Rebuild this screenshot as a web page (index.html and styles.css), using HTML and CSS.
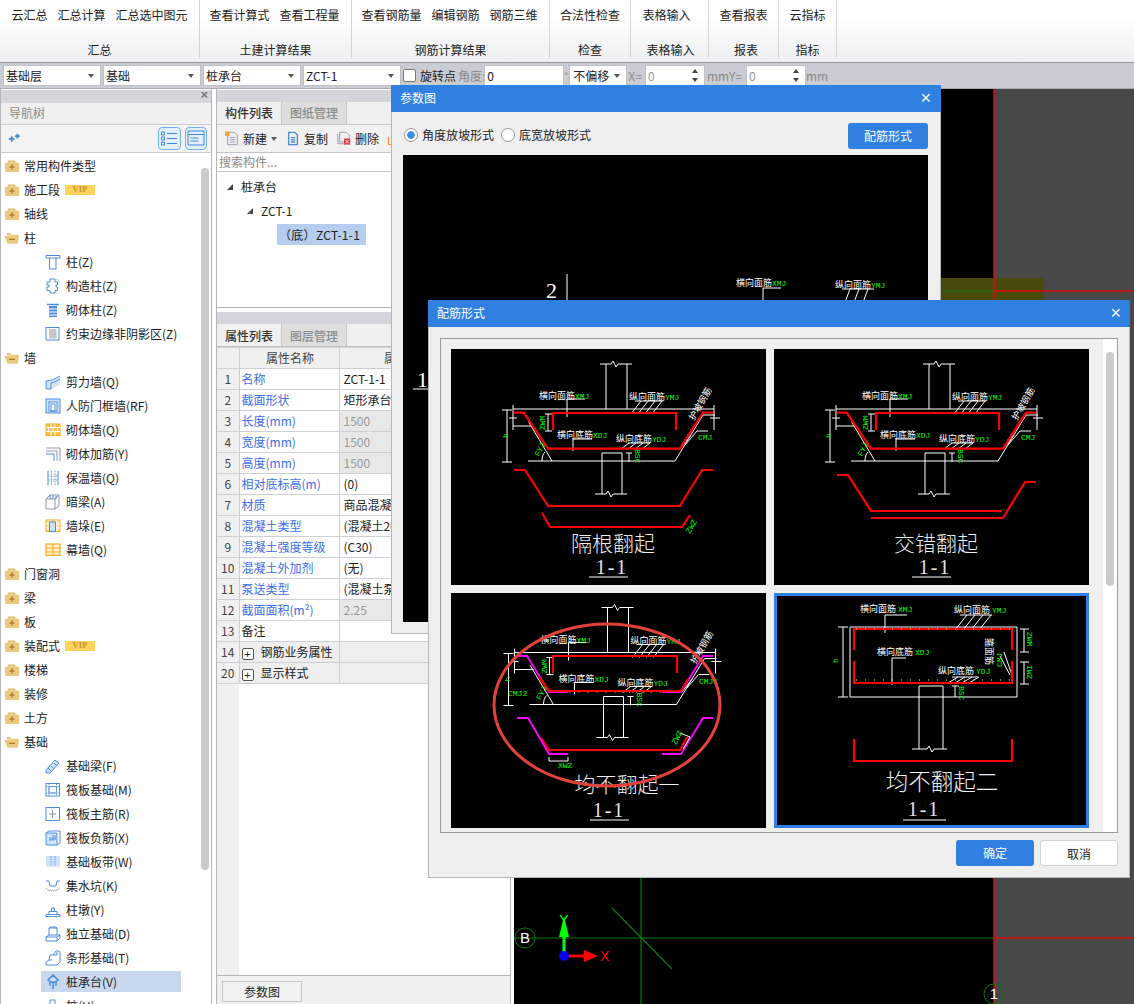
FILE: index.html
```html
<!DOCTYPE html>
<html lang="zh-CN">
<head>
<meta charset="utf-8">
<title>参数图</title>
<link rel="stylesheet" href="styles.css">
</head>
<body>
<svg class="defs" width="0" height="0">
  <defs>
    <symbol id="f-plus" viewBox="0 0 16 14"><path class="fo" d="M1 3.500V12a1 1 0 0 0 1 1h12a1 1 0 0 0 1-1V3.500z"/><path class="fo2" d="M4 3.500V1.500h7l1 2z"/><path class="fs" d="M8 5.500v5M5.500 8h5"/></symbol>
    <symbol id="f-minus" viewBox="0 0 17 14"><path class="fo2" d="M3 4V2h4l1 1.500h7V5z"/><path class="fo" d="M0.500 4.500H16l-1.500 8.500h-11z"/><path class="fs" d="M5.500 8.500h6"/></symbol>
    <symbol id="i-zhu" viewBox="0 0 16 16"><path class="b" d="M1 1.500h14v2.500H1zM4.500 4v11h6.500V4"/></symbol>
    <symbol id="i-gz" viewBox="0 0 16 16"><path class="b" d="M5 1h5v3h2.500v3H11v2h1.500v3.500H10V15H5v-2.500H2V9h2V7H2V4h3z"/><path class="bl" d="M11 1l3 1.500v4"/></symbol>
    <symbol id="i-qz" viewBox="0 0 16 16"><path class="bb" d="M2 2.500h12"/><rect class="bf" x="4" y="4" width="8" height="11"/><path class="wl" d="M4 7h8M4 10h8M4 13h8"/></symbol>
    <symbol id="i-ys" viewBox="0 0 16 16"><rect class="b" x="1" y="1.500" width="13" height="12.500"/><rect class="gf" x="4" y="3" width="7.500" height="9.500"/></symbol>
    <symbol id="i-jl" viewBox="0 0 16 16"><path class="lf" d="M1 7c4 0 9-2 14-5v9c-5 2-8 4-9 4H1z"/><path class="b" d="M1 7c4 0 9-2 14-5M1 7v8h5V9M6 9c4-1 6-2 9-4"/></symbol>
    <symbol id="i-rf" viewBox="0 0 16 16"><rect class="lfb" x="1" y="1" width="14" height="14"/><rect class="b wf" x="4" y="4" width="8" height="9"/><rect class="b" x="6" y="6" width="4" height="7"/></symbol>
    <symbol id="i-qt" viewBox="0 0 16 14"><rect class="yf" x="1" y="1" width="14" height="11.500"/><path class="ws" d="M1 4.500h14M1 8.500h14M6 1v3.500M10 1v3.500M3.500 4.500v4M8 4.500v4M12.500 4.500v4M6 8.500v4M10 8.500v4"/></symbol>
    <symbol id="i-jj" viewBox="0 0 16 16"><path class="k" d="M1 2h14v13M1 5h11v10"/><path class="b" d="M1 8h8v7"/></symbol>
    <symbol id="i-bw" viewBox="0 0 16 16"><path class="b" d="M3 1v14M13 1v14"/><path class="bd" d="M6.500 1v14M10 1v14M3 6h10M3 10h10"/></symbol>
    <symbol id="i-al" viewBox="0 0 16 16"><path class="k" d="M1 5h9v10H1zM1 5l4-4h9l-4 4M10 15l4-3V1"/><path class="b" d="M5 1v4M8 1v4M11 2v3"/></symbol>
    <symbol id="i-dq" viewBox="0 0 16 14"><rect class="yf2" x="1" y="1" width="14" height="11.500"/><path class="ws" d="M1 5h14M1 9h14M5 1v11.500M11 1v11.500"/><rect class="lfb" x="4.500" y="3" width="6" height="9.500"/></symbol>
    <symbol id="i-mq" viewBox="0 0 16 14"><rect class="yo" x="1" y="1" width="14" height="11.500"/><path class="yl" d="M1 5h14M8 5v7.500M1 9h14M8 1v4"/></symbol>
    <symbol id="i-jcl" viewBox="0 0 16 16"><path class="lfb" d="M1 12L10 2l4 3-9 10H1z"/><path class="b" d="M3 10l3 3M6 8l3 3M9 5l3 3"/></symbol>
    <symbol id="i-fb" viewBox="0 0 16 16"><rect class="b" x="1" y="1.500" width="13.500" height="12.500"/><rect class="b" x="4" y="4.500" width="7.500" height="6.500"/><path class="bd" d="M1 4.500h13M1 11h13M4 1.500v13M11.500 1.500v13"/></symbol>
    <symbol id="i-zj" viewBox="0 0 16 16"><rect class="b" x="1" y="1.500" width="13.500" height="13"/><path class="k" d="M7.500 4v8M4 8h7"/></symbol>
    <symbol id="i-fj" viewBox="0 0 16 16"><path class="lf b" d="M1 3h11v12H1z"/><path class="b" d="M1 3l3-2h11v12l-3 2M5 7v4M8 5v6M5 9h6M10 5v4"/></symbol>
    <symbol id="i-bd" viewBox="0 0 16 16"><rect class="lfb0" x="1" y="2" width="14" height="10.500"/><path class="bd" d="M6 2v10.500M10 2v10.500"/></symbol>
    <symbol id="i-js" viewBox="0 0 16 16"><path class="b" d="M1 3h3l1 5h6l1-5h3"/><path class="kd" d="M1 10c2 4 11 4 14 0M3 12h10"/></symbol>
    <symbol id="i-zd" viewBox="0 0 16 16"><path class="b" d="M1 12.500h14v2H1zM4 12.500v-3h8v3M6.500 9.500V6h3v3.500"/></symbol>
    <symbol id="i-dl" viewBox="0 0 16 16"><path class="b" d="M1 11h11v4H1zM1 11l3-2h11l-3 2M12 15l3-3V9M4 9V2l2-1h5l1 1v7M4 2h8"/></symbol>
    <symbol id="i-tx" viewBox="0 0 16 16"><path class="b" d="M1 15v-3l3-2 1-5h3l3-4h3l1 1v10l-3 3zM4 10h3M8 5h4V2"/></symbol>
    <symbol id="i-zct" viewBox="0 0 16 16"><path class="bb" d="M3 6l5-5 5 5-3 2H6zM8 8v7M5 8v4M11 8v4"/><path class="lfb0" d="M8 3l3 3-2 1H7L5 6z"/></symbol>
    <symbol id="i-zz" viewBox="0 0 16 16"><path class="b" d="M5 2h5v6H5zM7 8v7"/></symbol>
    <symbol id="i-new" viewBox="0 0 16 16"><path class="k" d="M3 1h8l3 3v11H3zM5.500 7h6M5.500 9.500h6M5.500 12h6"/><rect class="of" x="0" y="0" width="5" height="5"/></symbol>
    <symbol id="i-copy" viewBox="0 0 16 16"><path class="bb" d="M3 1h7l3 3v11H3zM5.500 7h5M5.500 9.500h5M5.500 12h5"/></symbol>
    <symbol id="i-del" viewBox="0 0 16 16"><path class="k" d="M3 1h8l3 3v3M3 1v11h5M1 3v11h7"/><rect class="rf" x="8" y="8" width="7" height="7"/><path class="ws" d="M9.500 9.500l4 4M13.500 9.500l-4 4"/></symbol>

    <g id="sec">
      <path class="w" d="M149 15H160l2-3 3 6 2-3H181M155 15V60M176 15V60M62 60H263M62 56V81M263 56V81M56 61V113M51 61H61M51 113H61M62 77H81M77.500 72.700L101 112M77 112H224L252 66H264M246 82H257M151 145V104H171V145M144 145H155l2-3 3 6 2-3H176M116 50H134M116 50V68M184 52H212M190 52L180 65M197 52L187 65M204 52L194 65M211 52L201 65M122 90H141M122 90V102M177 94H199M178 94L170 100M185 94L177 100M192 94L184 100M199 94L191 100M97 65V82M94 65H101M94 82H101M178 104V113M175 104H181M91 112c0-4 1-7 3-9M234 96L246 82M229 100L240 86M58 69h8M259 69h10"/>
      <text class="cn" x="88" y="50">横向面筋<tspan class="en">XMJ</tspan></text>
      <text class="cn" x="178" y="51">纵向面筋<tspan class="en">YMJ</tspan></text>
      <text class="cn" x="106" y="89">横向底筋<tspan class="en">XDJ</tspan></text>
      <text class="cn" x="165" y="93">纵向底筋<tspan class="en">YDJ</tspan></text>
      <text class="en" transform="translate(57 89) rotate(-90)">h</text>
      <text class="en" transform="translate(94 81) rotate(-90)">ZWM</text>
      <text class="en" transform="translate(88 108) rotate(-62)">FYJ</text>
      <text class="cn" transform="translate(243 72) rotate(-60)">护坡钢筋</text>
      <text class="en" transform="translate(184 100) rotate(90)">BSC</text>
      <path class="md" d="M230 96L245 72"/>
    </g>
    <g id="marks"><path class="dots" d="M104 64H224M99 99.700H228"/></g>
  </defs>
</svg>

<div class="app">
  <header class="ribbon">
    <section class="rgroup g1"><div class="rbtns"><span>云汇总</span><span>汇总计算</span><span>汇总选中图元</span></div><div class="rlabel">汇总</div></section>
    <section class="rgroup g2"><div class="rbtns"><span>查看计算式</span><span>查看工程量</span></div><div class="rlabel">土建计算结果</div></section>
    <section class="rgroup g3"><div class="rbtns"><span>查看钢筋量</span><span>编辑钢筋</span><span>钢筋三维</span></div><div class="rlabel">钢筋计算结果</div></section>
    <section class="rgroup g4"><div class="rbtns"><span>合法性检查</span></div><div class="rlabel">检查</div></section>
    <section class="rgroup g5"><div class="rbtns"><span>表格输入</span></div><div class="rlabel">表格输入</div></section>
    <section class="rgroup g6"><div class="rbtns"><span>查看报表</span></div><div class="rlabel">报表</div></section>
    <section class="rgroup g7"><div class="rbtns"><span>云指标</span></div><div class="rlabel">指标</div></section>
  </header>

  <div class="toolbar">
    <div class="sel sel-98">基础层<i class="caret"></i></div>
    <div class="sel sel-98">基础<i class="caret"></i></div>
    <div class="sel sel-98">桩承台<i class="caret"></i></div>
    <div class="sel sel-98">ZCT-1<i class="caret"></i></div>
    <span class="check"></span>
    <span class="tlabel lab-rot">旋转点</span><span class="tlabel dim">角度:</span>
    <div class="num num-angle">0</div>
    <span class="tlabel dim deg">°</span>
    <div class="sel sel-off">不偏移<i class="caret"></i></div>
    <span class="tlabel dim lab-x">X=</span>
    <div class="num num-60 muted">0<span class="spin"></span></div>
    <span class="tlabel dim lab-y">mmY=</span>
    <div class="num num-60 muted">0<span class="spin"></span></div>
    <span class="tlabel dim lab-mm">mm</span>
  </div>

  <main class="main">
    <aside class="nav">
      <div class="strip"><span class="strip-x">×</span></div>
      <div class="nav-title">导航树</div>
      <div class="nav-tools">
        <svg class="sparkle" viewBox="0 0 14 10"><path d="M4 3v6M1 6h6M10 0.500v5M7.500 3h5"/></svg>
        <span class="view-btn"><svg viewBox="0 0 18 16"><path d="M1.500 2h3v3h-3zM1.500 7h3v3h-3zM1.500 12h3v3h-3zM7 3.500h10M7 8.500h10M7 13.500h10"/></svg></span>
        <span class="view-btn"><svg viewBox="0 0 18 16"><path d="M1 1h16v14H1zM1 4.500h16M3.500 8h8M3.500 11h8"/></svg></span>
      </div>
      <div class="nav-body">
        <ul class="tree">
          <li class="cat"><svg class="fold"><use href="#f-plus"/></svg>常用构件类型</li>
          <li class="cat"><svg class="fold"><use href="#f-plus"/></svg>施工段<b class="vip">VIP</b></li>
          <li class="cat"><svg class="fold"><use href="#f-plus"/></svg>轴线</li>
          <li class="cat"><svg class="fold"><use href="#f-minus"/></svg>柱</li>
          <li class="item"><svg class="ic"><use href="#i-zhu"/></svg>柱(Z)</li>
          <li class="item"><svg class="ic"><use href="#i-gz"/></svg>构造柱(Z)</li>
          <li class="item"><svg class="ic"><use href="#i-qz"/></svg>砌体柱(Z)</li>
          <li class="item"><svg class="ic"><use href="#i-ys"/></svg>约束边缘非阴影区(Z)</li>
          <li class="cat"><svg class="fold"><use href="#f-minus"/></svg>墙</li>
          <li class="item"><svg class="ic"><use href="#i-jl"/></svg>剪力墙(Q)</li>
          <li class="item"><svg class="ic"><use href="#i-rf"/></svg>人防门框墙(RF)</li>
          <li class="item"><svg class="ic"><use href="#i-qt"/></svg>砌体墙(Q)</li>
          <li class="item"><svg class="ic"><use href="#i-jj"/></svg>砌体加筋(Y)</li>
          <li class="item"><svg class="ic"><use href="#i-bw"/></svg>保温墙(Q)</li>
          <li class="item"><svg class="ic"><use href="#i-al"/></svg>暗梁(A)</li>
          <li class="item"><svg class="ic"><use href="#i-dq"/></svg>墙垛(E)</li>
          <li class="item"><svg class="ic"><use href="#i-mq"/></svg>幕墙(Q)</li>
          <li class="cat"><svg class="fold"><use href="#f-plus"/></svg>门窗洞</li>
          <li class="cat"><svg class="fold"><use href="#f-plus"/></svg>梁</li>
          <li class="cat"><svg class="fold"><use href="#f-plus"/></svg>板</li>
          <li class="cat"><svg class="fold"><use href="#f-plus"/></svg>装配式<b class="vip">VIP</b></li>
          <li class="cat"><svg class="fold"><use href="#f-plus"/></svg>楼梯</li>
          <li class="cat"><svg class="fold"><use href="#f-plus"/></svg>装修</li>
          <li class="cat"><svg class="fold"><use href="#f-plus"/></svg>土方</li>
          <li class="cat"><svg class="fold"><use href="#f-minus"/></svg>基础</li>
          <li class="item"><svg class="ic"><use href="#i-jcl"/></svg>基础梁(F)</li>
          <li class="item"><svg class="ic"><use href="#i-fb"/></svg>筏板基础(M)</li>
          <li class="item"><svg class="ic"><use href="#i-zj"/></svg>筏板主筋(R)</li>
          <li class="item"><svg class="ic"><use href="#i-fj"/></svg>筏板负筋(X)</li>
          <li class="item"><svg class="ic"><use href="#i-bd"/></svg>基础板带(W)</li>
          <li class="item"><svg class="ic"><use href="#i-js"/></svg>集水坑(K)</li>
          <li class="item"><svg class="ic"><use href="#i-zd"/></svg>柱墩(Y)</li>
          <li class="item"><svg class="ic"><use href="#i-dl"/></svg>独立基础(D)</li>
          <li class="item"><svg class="ic"><use href="#i-tx"/></svg>条形基础(T)</li>
          <li class="item active"><svg class="ic"><use href="#i-zct"/></svg>桩承台(V)</li>
          <li class="item"><svg class="ic"><use href="#i-zz"/></svg>桩(U)</li>
        </ul>
        <div class="nav-scroll"><div class="nav-thumb"></div></div>
      </div>
    </aside>

    <section class="mid">
      <div class="strip"></div>
      <div class="tabs"><span class="tab on">构件列表</span><span class="tab">图纸管理</span></div>
      <div class="mid-tools">
        <svg class="tool-ic"><use href="#i-new"/></svg><span class="tool-txt">新建</span><i class="caret"></i>
        <svg class="tool-ic ti-copy"><use href="#i-copy"/></svg><span class="tool-txt">复制</span>
        <svg class="tool-ic ti-del"><use href="#i-del"/></svg><span class="tool-txt">删除</span>
        <i class="tool-edge"></i>
      </div>
      <div class="search">搜索构件...</div>
      <div class="ctree">
        <div class="cnode n0"><i class="tri"></i>桩承台</div>
        <div class="cnode n1"><i class="tri"></i>ZCT-1</div>
        <div class="cnode n2"><span class="csel">（底）ZCT-1-1</span></div>
      </div>
      <div class="strip strip-2"></div>
      <div class="tabs tabs-2"><span class="tab on">属性列表</span><span class="tab">图层管理</span></div>
      <table class="props">
        <thead><tr><th class="c0"></th><th class="c1">属性名称</th><th class="c2">属性值</th><th class="c3">附加</th></tr></thead>
        <tbody>
          <tr><td class="c0">1</td><td class="c1 name">名称</td><td>ZCT-1-1</td><td></td></tr>
          <tr><td class="c0">2</td><td class="c1 name">截面形状</td><td>矩形承台</td><td></td></tr>
          <tr><td class="c0">3</td><td class="c1 name">长度(mm)</td><td class="ro">1500</td><td></td></tr>
          <tr><td class="c0">4</td><td class="c1 name">宽度(mm)</td><td class="ro">1500</td><td></td></tr>
          <tr><td class="c0">5</td><td class="c1 name">高度(mm)</td><td class="ro">1500</td><td></td></tr>
          <tr><td class="c0">6</td><td class="c1 name">相对底标高(m)</td><td>(0)</td><td></td></tr>
          <tr><td class="c0">7</td><td class="c1 name">材质</td><td>商品混凝土</td><td></td></tr>
          <tr><td class="c0">8</td><td class="c1 name">混凝土类型</td><td>(混凝土20石)</td><td></td></tr>
          <tr><td class="c0">9</td><td class="c1 name">混凝土强度等级</td><td>(C30)</td><td></td></tr>
          <tr><td class="c0">10</td><td class="c1 name">混凝土外加剂</td><td>(无)</td><td></td></tr>
          <tr><td class="c0">11</td><td class="c1 name">泵送类型</td><td>(混凝土泵)</td><td></td></tr>
          <tr><td class="c0">12</td><td class="c1 name">截面面积(m²)</td><td class="ro">2.25</td><td></td></tr>
          <tr><td class="c0">13</td><td class="c1">备注</td><td></td><td></td></tr>
          <tr class="grp"><td class="c0">14</td><td class="c1"><i class="pbox">+</i>钢筋业务属性</td><td></td><td></td></tr>
          <tr class="grp"><td class="c0">20</td><td class="c1"><i class="pbox">+</i>显示样式</td><td></td><td></td></tr>
        </tbody>
      </table>
      <div class="props-fill"><div class="fill-idx"></div></div>
      <div class="mid-foot"><span class="foot-btn">参数图</span></div>
    </section>

    <div class="canvas">
      <svg class="cad" width="620" height="915" viewBox="0 0 620 915">
        <rect class="gray" x="480" y="0" width="140" height="915"/>
        <rect class="olive" x="426" y="189" width="104" height="40"/>
        <path class="cg" d="M426 202H480M0 849H480M127 789V915"/>
        <path class="cg" d="M98 819L158 880"/>
        <path class="cr" d="M480 0V915M480 202H620M480 849H620"/>
        <circle class="cgc" cx="11" cy="849" r="10"/>
        <text class="cadt" x="11" y="854">B</text>
        <circle class="cgc" cx="480" cy="905" r="10"/>
        <text class="cadt" x="480" y="910">1</text>
        <path class="ay" d="M50 867V845"/><path class="ayf" d="M45 848L50 827L55 848z"/>
        <path class="ax" d="M50 867H72"/><path class="axf" d="M70 861L84 867L70 873z"/>
        <circle class="ao" cx="50" cy="867" r="5"/>
        <text class="ayt" x="50" y="836">Y</text>
        <text class="axt" x="86" y="872">X</text>
      </svg>
    </div>
  </main>

  <div class="dlg dlg-params">
    <div class="dlg-head head-params"><span>参数图</span><span class="dlg-x">×</span></div>
    <div class="params-bar">
      <span class="radio on"></span><span class="rtxt">角度放坡形式</span>
      <span class="radio r2"></span><span class="rtxt">底宽放坡形式</span>
      <span class="btn btn-blue btn-form">配筋形式</span>
    </div>
    <div class="params-view">
      <svg width="525" height="467" viewBox="0 0 525 467">
        <text class="big" x="143" y="143">2</text>
        <path class="w" d="M164 119V160M360 133H378M360 133V160M439 134H471M447 134L441 150M456 134L450 150M465 134L459 150"/>
        <text class="cn" x="333" y="131">横向面筋<tspan class="en">XMJ</tspan></text>
        <text class="cn" x="432" y="133">纵向面筋<tspan class="en">YMJ</tspan></text>
        <text class="big" x="14" y="232">1</text>
        <path class="w" d="M10 234H25"/>
      </svg>
    </div>
  </div>

  <div class="dlg dlg-rebar">
    <div class="dlg-head"><span>配筋形式</span><span class="dlg-x">×</span></div>
    <div class="rebar-body">
      <div class="rebar-frame">
        <div class="rebar-grid">
          <div class="tile">
            <svg width="315" height="236" viewBox="0 0 315 236">
              <use href="#sec"/><use href="#marks"/>
              <path class="r" d="M63 63.700H72.700L97 99.700H229L252 63.700H262M102 81V64H225V81M63 121H74L97 157H229L251 121H262M91 164L99 178H231L239 166"/>
              <text class="en" x="247" y="91">CMJ</text>
              <text class="en" transform="translate(239 185) rotate(-60)">ZWZ</text>
              <text class="title" x="162" y="202">隔根翻起</text>
              <text class="sub" x="161" y="225">1-1</text>
              <path class="w" d="M138 228H177"/>
            </svg>
          </div>
          <div class="tile">
            <svg width="315" height="236" viewBox="0 0 315 236">
              <use href="#sec"/><use href="#marks"/>
              <path class="r" d="M63 63.700H72.700L97 99.700H229L252 63.700H262M102 81V64H225V81M63 126H74L97 162H228M97 169H229L251 133H262"/>
              <text class="en" x="247" y="91">CMJ</text>
              <text class="title" x="162" y="202">交错翻起</text>
              <text class="sub" x="161" y="225">1-1</text>
              <path class="w" d="M138 228H177"/>
            </svg>
          </div>
          <div class="tile">
            <svg width="315" height="235" viewBox="0 0 315 235">
              <use href="#sec" transform="translate(1.500 -0.500)"/>
              <use href="#marks" transform="translate(1.500 -0.500)"/>
              <path class="m" d="M66 63H76L98 99H117M211 99H230L252 63H262"/>
              <path class="r" d="M102 80V63H226V80M88 84L98 98H230L237 86M90 145L98 157H229L236 144"/>
              <path class="m" d="M66 125H77L98 161H117M211 161H230L252 125H262"/>
              <path class="w" d="M98 164V168H117V164M229 140L239 144L232 156"/>
              <text class="en" x="107" y="175">XWZ</text>
              <text class="en" transform="translate(225 152) rotate(-62)">ZWZ</text>
              <text class="en" x="57" y="103">CMJ2</text>
              <text class="en" x="248" y="91">CMJ1</text>
              <text class="title" x="176" y="199">均不翻起一</text>
              <text class="sub" x="158" y="224">1-1</text>
              <path class="w" d="M139 227H178"/>
              <ellipse class="ring" cx="156" cy="112" rx="113" ry="81"/>
            </svg>
          </div>
          <div class="tile tile-on">
            <svg width="315" height="235" viewBox="0 0 315 235">
              <path class="w" d="M76 34H243V104H76zM69 34V104M64 34H74M64 104H74M145 156V93H169V156M138 156H153l2-3 3 6 2-3H173M111 22H133M111 22V40M186 22H218M193 22L181 37M201 22L189 37M209 22L197 37M217 22L205 37M118 65H132M118 65V92M178 84H204M184 84L174 90M191 84L181 90M198 84L188 90M205 84L195 90M250 36V59M246 36H255M246 59H255M250 69V91M246 69H255M246 91H255M181 93V104M178 93H185M230 59L238 82M226 63L236 82"/>
              <path class="r" d="M80 57V36H238V57M80 68V90H238V68M80 146V168H238V146"/>
              <path class="dots" d="M82 36H236M82 87H236"/>
              <text class="cn" x="86" y="19">横向面筋 <tspan class="en">XMJ</tspan></text>
              <text class="cn" x="180" y="20">纵向面筋 <tspan class="en">YMJ</tspan></text>
              <text class="cn" x="103" y="62">横向底筋 <tspan class="en">XDJ</tspan></text>
              <text class="cn" x="164" y="81">纵向底筋 <tspan class="en">YDJ</tspan></text>
              <text class="en" transform="translate(64 70) rotate(-90)">h</text>
              <text class="en" transform="translate(253 39) rotate(90)">ZWM</text>
              <text class="en" transform="translate(253 72) rotate(90)">IWZ</text>
              <text class="en" transform="translate(185 93) rotate(90)">BSC</text>
              <text class="en" transform="translate(228 74) rotate(-90)">CMJ</text>
              <text class="cn" transform="translate(212 45) rotate(90)">箍面筋</text>
              <text class="title title-lg" x="168" y="197">均不翻起二</text>
              <text class="sub" x="150" y="223">1-1</text>
              <path class="w" d="M129 227H172"/>
            </svg>
          </div>
        </div>
        <div class="rebar-scroll"><div class="rebar-thumb"></div></div>
      </div>
      <div class="rebar-actions">
        <span class="btn btn-blue">确定</span>
        <span class="btn btn-white">取消</span>
      </div>
    </div>
  </div>
</div>
</body>
</html>
```

FILE: styles.css
```css
* { box-sizing: border-box; }
html, body { margin: 0; padding: 0; }
body {
  width: 1134px; height: 1004px; overflow: hidden; background: #fff; color: #222;
  font-family: "Noto Sans CJK SC", "Liberation Sans", sans-serif; font-size: 12px; line-height: 16px;
}
.defs { position: absolute; }
.app { position: relative; width: 1134px; height: 1004px; display: flex; flex-direction: column; overflow: hidden; }

/* ribbon */
.ribbon { height: 63px; flex: none; display: flex; background: linear-gradient(#fff 25%, #edeff0); border-bottom: 1px solid #999; }
.rgroup { height: 58px; border-right: 1px solid #d2d4d6; display: flex; flex-direction: column; }
.g1 { width: 200px; } .g2 { width: 152px; } .g3 { width: 198px; } .g4 { width: 81px; }
.g5 { width: 78px; } .g6 { width: 70px; } .g7 { width: 58px; }
.rbtns { height: 45px; padding-top: 7px; display: flex; justify-content: center; gap: 10px; }
.g2 .rbtns { padding-right: 2px; }
.g3 .rbtns { padding-right: 2px; }
.g5 .rbtns { padding-right: 6px; }
.g5 .rlabel { padding-left: 2px; }
.g6 .rlabel { padding-left: 5px; }
.rlabel { text-align: center; }

/* toolbar */
.toolbar { height: 26px; flex: none; background: #c9ccd2; border-bottom: 1px solid #a9abaf; display: flex; align-items: center; padding-left: 3px; }
.sel { height: 21px; background: #fff; border: 1px solid #bfc1c5; padding-left: 2px; line-height: 19px; position: relative; }
.sel-98 { width: 98px; margin-right: 2px; }
.sel-off { width: 58px; padding-left: 3px; }
.caret { position: absolute; right: 6px; top: 8px; width: 0; height: 0; border: 3.5px solid transparent; border-top: 4px solid #555; border-bottom: 0; }
.check { width: 13px; height: 13px; background: #fff; border: 1px solid #777; border-radius: 2px; margin-right: 4px; }
.tlabel { white-space: nowrap; }
.dim { color: #8a8a8a; }
.lab-rot { width: 38px; }
.deg { width: 5px; font-size: 10px; margin-right: 0; }
.num { height: 21px; background: #fff; border: 1px solid #bfc1c5; padding-left: 2px; line-height: 19px; position: relative; }
.num-angle { width: 80px; margin-left: -1px; }
.num-60 { width: 60px; }
.muted { color: #999; }
.lab-x { margin: 0 3px 0 1px; }
.lab-y { margin: 0 4px 0 2px; }
.lab-mm { margin-left: 0; }
.spin { position: absolute; right: 4px; top: 0; width: 8px; height: 19px; }
.spin::before, .spin::after { content: ""; position: absolute; left: 0; width: 0; height: 0; border-left: 3.500px solid transparent; border-right: 3.500px solid transparent; }
.spin::before { top: 3px; border-bottom: 4px solid #444; }
.spin::after { bottom: 3px; border-top: 4px solid #444; }

/* main area */
.main { flex: 1; display: flex; min-height: 0; background: #fff; }
.strip { height: 12px; margin-top: 1px; background: #d3d5da; position: relative; flex: none; }
.strip-x { position: absolute; right: 3px; top: -3px; color: #777; font: bold 13px/16px "Liberation Sans", sans-serif; }

/* navigation tree */
.nav { width: 212px; flex: none; display: flex; flex-direction: column; border-left: 1px solid #b4b6ba; border-right: 1px solid #b4b6ba; }
.nav-title { height: 23px; flex: none; background: #f0f0f0; color: #8a8a8a; padding: 2px 8px; border-bottom: 1px solid #c9cbcf; border-top: 1px solid #d9dadd; }
.nav-tools { height: 28px; flex: none; background: #f4f4f4; border-bottom: 1px solid #c9cbcf; display: flex; align-items: center; padding-left: 7px; padding-bottom: 1px; }
.sparkle { width: 14px; height: 10px; margin-right: 137px; fill: none; stroke: #3f86df; stroke-width: 1.800; }
.view-btn { width: 24px; height: 23px; border: 1px solid #6fb0f2; border-radius: 4px; background: #e4f0fc; margin-right: 4px; display: flex; align-items: center; justify-content: center; }
.view-btn svg { width: 18px; height: 16px; fill: none; stroke: #3f86df; stroke-width: 1; }
.nav-body { flex: 1; position: relative; overflow: hidden; min-height: 0; }
.tree { list-style: none; margin: 0; padding: 1px 0 0; }
.cat, .item { height: 24px; display: flex; align-items: center; white-space: nowrap; }
.cat { padding-left: 3px; }
.item { padding-left: 44px; }
.fold { width: 16px; height: 14px; margin-right: 4px; flex: none; }
.ic { width: 16px; height: 16px; margin-right: 5px; flex: none; }
.active { background: #c8d9ef; margin-left: 40px; padding-left: 4px; width: 140px; height: 21px; margin-top: 1px; margin-bottom: 2px; }
.vip { margin-left: 5px; width: 30px; height: 10px; background: #fdd35c; color: #c09227; font: bold 8px/10px "Liberation Serif", serif; text-align: center; letter-spacing: 0.500px; }
.nav-scroll { position: absolute; right: 2px; top: 0; bottom: 0; width: 8px; }
.nav-thumb { margin-top: 15px; height: 702px; background: #cbcbcb; border-radius: 4px; }

/* icon strokes */
.b, .bb, .bd, .bl, .k, .kd, .ws, .wl, .fs, .yl { fill: none; }
.b { stroke: #4a8ddd; stroke-width: 1; }
.bb { stroke: #4a8ddd; stroke-width: 1.500; }
.bd { stroke: #6ca3e6; stroke-width: 1; stroke-dasharray: 1.500 1; }
.bl { stroke: #b5d2f3; stroke-width: 1; }
.bf { fill: #4a8ddd; }
.k { stroke: #8a97a6; stroke-width: 1; }
.kd { stroke: #a2a9b2; stroke-width: 1.200; stroke-dasharray: 1 1; }
.gf { fill: #c5c5c5; }
.wf { fill: #fff; }
.lf { fill: #d4e4f8; }
.lf.b { stroke: #4a8ddd; }
.lfb { fill: #cfe1f8; stroke: #4a8ddd; stroke-width: 1; }
.lfb0 { fill: #cfe1f8; }
.yf { fill: #fbc04c; stroke: #f3ac1f; }
.yf2 { fill: #fde3a3; stroke: #f3ac1f; }
.yo { fill: #fff0c9; stroke: #f3ac1f; stroke-width: 1.200; }
.yl { stroke: #f3ac1f; stroke-width: 1; }
.ws { stroke: #fff; stroke-width: 1; }
.wl { stroke: #fff; stroke-width: 1; }
.fo { fill: #edc97f; }
.fo2 { fill: #e3bd70; }
.fs { stroke: #b07f24; stroke-width: 1.500; }
.of { fill: #f2a33a; }
.rf { fill: #d9363e; }

/* middle panel */
.mid { width: 295px; margin-left: 4px; flex: none; display: flex; flex-direction: column; border-left: 1px solid #b4b6ba; border-right: 1px solid #b4b6ba; background: #fff; }
.tabs { height: 23px; flex: none; background: #f0f0f0; display: flex; border-bottom: 1px solid #c4c6ca; }
.tab { width: 65px; text-align: center; line-height: 22px; background: #dedede; color: #8c8c8c; font-weight: 500; border-right: 1px solid #c4c6ca; }
.tab.on { background: #f0f0f0; color: #333; }
.tabs-2 .tab { line-height: 24px; }
.mid-tools { height: 28px; flex: none; background: #f1f1f1; border-bottom: 1px solid #c4c6ca; display: flex; align-items: center; padding-left: 8px; position: relative; white-space: nowrap; }
.tool-ic { width: 14px; height: 15px; flex: none; margin-right: 4px; }
.tool-txt { width: 24px; }
.mid-tools .caret { position: static; margin-left: 4px; margin-right: 9px; margin-top: 1px; }
.ti-del { margin-left: 9px; }
.tool-edge { width: 3px; height: 8px; margin-left: 9px; margin-top: 4px; border-left: 1px solid #f08a24; border-bottom: 1px solid #f08a24; }
.search { height: 19px; flex: none; color: #8a8a8a; padding-left: 2px; line-height: 18px; border-bottom: 1px solid #c4c6ca; background: #fff; }
.ctree { height: 136px; flex: none; border-bottom: 1px solid #b4b6ba; padding-top: 3px; }
.cnode { height: 24px; display: flex; align-items: center; position: relative; white-space: nowrap; }
.n0 { padding-left: 22px; } .n1 { padding-left: 42px; } .n2 { padding-left: 60px; margin-top: -1px; }
.tri { width: 0; height: 0; margin-left: -12px; margin-right: 8px; border-style: solid; border-width: 0 0 6px 6px; border-color: transparent transparent #444 transparent; }
.csel { width: 89px; height: 21px; line-height: 21px; background: #b5cdee; padding-left: 2px; white-space: nowrap; letter-spacing: 0.300px; }
.strip-2 { margin-top: 4px; }
.props { table-layout: fixed; width: 293px; flex: none; border-collapse: collapse; background: #fff; }
.props th, .props td { height: 21px; padding: 0 0 0 4px; font-weight: 400; border: 1px solid #cdcfd2; white-space: nowrap; overflow: hidden; line-height: 16px; border-left: 0; }
.props th { background: #f0f0f0; text-align: center; color: #444; padding-left: 0; }
.props .c0 { width: 22px; background: #f0f0f0; text-align: center; padding: 0; color: #444; }
.props .c1 { width: 100px; padding-left: 2px; }
.props .c2 { width: 126px; }
.props .name { color: #3d6ee8; }
.props .ro { background: #e8e8e8; color: #999; }
.grp td { background: #eeeeee; }
.pbox { display: inline-block; width: 12px; height: 12px; border: 1px solid #555; border-radius: 2px; margin-right: 7px; background: #fff; font: 11px/10px "Liberation Sans", sans-serif; text-align: center; vertical-align: -1px; }
.props-fill { flex: 1; min-height: 0; background: #fff; display: flex; border-bottom: 1px solid #b4b6ba; }
.fill-idx { width: 22px; background: #f0f0f0; }
.mid-foot { height: 28px; flex: none; background: #f0f0f0; padding: 5px 0 0 5px; }
.foot-btn { display: block; width: 80px; height: 21px; line-height: 20px; text-align: center; background: #f2f2f2; border: 1px solid #c4c6ca; }

/* canvas */
.canvas { flex: 1; margin-left: 3px; background: #000; overflow: hidden; }
.cad { display: block; }
.gray { fill: #484848; }
.olive { fill: #4a4a0e; }
.cg { fill: none; stroke: #0a7a0a; stroke-width: 1.200; }
.cr { fill: none; stroke: #d80d0d; stroke-width: 1.500; }
.cgc { fill: none; stroke: #0a7a0a; stroke-width: 1; }
.cadt { fill: #fff; font: 15px "Liberation Sans", sans-serif; text-anchor: middle; }
.ay { stroke: #0f0; stroke-width: 3; }
.ayf { fill: #0f0; }
.ax { stroke: #f00; stroke-width: 3; }
.axf { fill: #f00; }
.ao { fill: #0000f5; }
.ayt { fill: #0f0; font: 14px "Liberation Sans", sans-serif; text-anchor: middle; }
.axt { fill: #f00; font: 14px "Liberation Sans", sans-serif; }

/* dialogs */
.dlg { position: absolute; background: #efefef; border: 1px solid #b4b6ba; border-top: 0; display: flex; flex-direction: column; }
.dlg-params { left: 391px; top: 85px; width: 550px; height: 549px; }
.dlg-rebar { left: 428px; top: 300px; width: 702px; height: 578px; }
.dlg-head { height: 27px; flex: none; background: #2f80e0; color: #fff; display: flex; justify-content: space-between; align-items: center; padding: 0 9px 1px 9px; margin: 0 -1px; }
.head-params { padding-right: 10px; }
.dlg-x { font: 18px/18px "Liberation Sans", sans-serif; }
.params-bar { height: 43px; flex: none; display: flex; align-items: center; padding: 3px 12px 0 12px; position: relative; }
.radio { width: 14px; height: 14px; border-radius: 50%; border: 1px solid #999; background: #fff; flex: none; margin-right: 4px; }
.radio.on { background: radial-gradient(circle, #3f8cf0 0 3.500px, #fff 4px); }
.radio.r2 { margin-left: 7px; margin-right: 4px; }
.rtxt { white-space: nowrap; color: #222; }
.btn { display: block; width: 78px; height: 26px; line-height: 25px; text-align: center; border-radius: 3px; }
.btn-blue { background: #2f80e0; color: #fff; }
.btn-white { background: #fff; border: 1px solid #d0d0d0; }
.btn-form { width: 80px; margin-left: auto; margin-top: 1px; }
.params-view { width: 525px; height: 467px; margin-left: 11px; background: #000; flex: none; }
.params-view svg { display: block; }
.rebar-body { flex: 1; padding: 11px 11px 0; display: flex; flex-direction: column; }
.rebar-frame { height: 495px; background: #fff; border: 1px solid #9a9a9a; display: flex; overflow: hidden; flex: none; }
.rebar-grid { width: 662px; flex: none; background: #efefef; padding: 10px 0 0 10px; display: grid; grid-template-columns: 315px 315px; grid-template-rows: 236px 235px; gap: 8px; }
.tile { background: #000; position: relative; }
.tile svg { display: block; }
.tile-on { outline: 3px solid #2f80e0; outline-offset: -3px; }
.rebar-scroll { flex: 1; padding: 13px 0 0 3px; }
.rebar-thumb { width: 8px; height: 234px; background: #cbcbcb; border-radius: 4px; }
.rebar-actions { display: flex; justify-content: flex-end; gap: 6px; padding-top: 7px; }

/* drawing */
.w { fill: none; stroke: #fff; stroke-width: 1; }
.r { fill: none; stroke: #f00; stroke-width: 2.200; }
.m { fill: none; stroke: #f0f; stroke-width: 1.800; }
.md { fill: none; stroke: #f0f; stroke-width: 1; stroke-dasharray: 1 5; }
.dots { fill: none; stroke: #ff0; stroke-width: 1; stroke-dasharray: 1 8; }
.cn { fill: #fff; font: 9px "Noto Sans CJK SC", sans-serif; }
.en { fill: #0f0; font: 8px "Liberation Mono", monospace; }
.title { fill: #eee; font: 300 21px "Noto Sans CJK SC", sans-serif; text-anchor: middle; }
.title-lg { font-size: 22.500px; }
.sub { fill: #e4e4e4; font: 20px "Liberation Serif", serif; text-anchor: middle; letter-spacing: 2px; }
.big { fill: #fff; font: 22px "Liberation Serif", serif; }
.ring { fill: none; stroke: #e2423a; stroke-width: 3; }
```
